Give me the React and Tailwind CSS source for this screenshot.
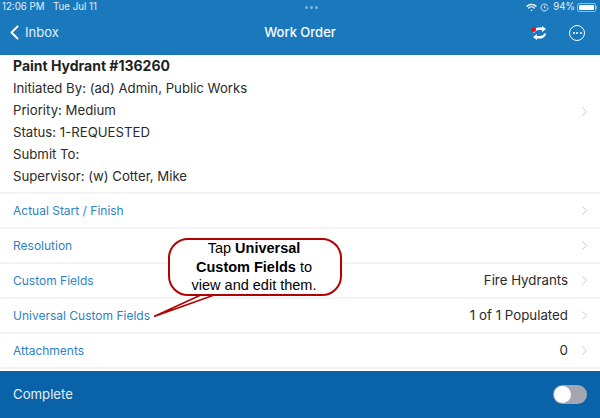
import { ChevronRight } from "lucide-react";

const rows = [
  { label: "Actual Start / Finish" },
  { label: "Resolution" },
  { label: "Custom Fields", value: "Fire Hydrants" },
  { label: "Universal Custom Fields", value: "1 of 1 Populated" },
  { label: "Attachments", value: "0" },
];

const details = ["Initiated By: (ad) Admin, Public Works", "Priority: Medium", "Status: 1-REQUESTED", "Submit To:", "Supervisor: (w) Cotter, Mike"];

const Chevron = () => <ChevronRight size={15} strokeWidth={1.5} className="text-[#c4c6cb] shrink-0" />;

const StatusBar = () => (
  <div className="flex items-center h-[15px] pl-[2px] pr-[3px] text-[9.7px] text-[#e4eff8]">
    <span className="w-[51px]">12:06 PM</span>
    <span>Tue Jul 11</span>
    <div className="flex-1 flex justify-center gap-[2px] pr-[1px]">
      <span className="w-[3px] h-[3px] rounded-full bg-[#7fb6e0]" />
      <span className="w-[3px] h-[3px] rounded-full bg-[#7fb6e0]" />
      <span className="w-[3px] h-[3px] rounded-full bg-[#7fb6e0]" />
    </div>
    <svg width="11" height="9" viewBox="0 0 22 18" fill="none" stroke="#fff" strokeWidth="2.6" strokeLinecap="round">
      <path d="M2 6.5C7 1.5 15 1.5 20 6.5" />
      <path d="M5.5 10C8.5 7 13.5 7 16.5 10" />
      <circle cx="11" cy="14.5" r="1.6" fill="#fff" stroke="none" />
    </svg>
    <svg width="9" height="9" viewBox="0 0 18 18" fill="none" stroke="#e4eff8" strokeWidth="1.8" className="ml-[3px]">
      <path d="M15.5 6.5A7 7 0 1 0 16 9" />
      <path d="M9 5.5v4h2.5" />
    </svg>
    <span className="ml-[4px]">94%</span>
    <div className="ml-[2px] flex items-center">
      <div className="w-[19px] h-[9px] rounded-[2px] border border-[#8fbfe4] p-[1px]">
        <div className="h-full w-[15px] rounded-[1px] bg-white" />
      </div>
      <div className="w-[1px] h-[3px] bg-[#8fbfe4]" />
    </div>
  </div>
);

const Header = () => (
  <div className="flex items-center h-[39px] pl-[9px] pr-[9px] pb-[4px]">
    <div className="flex flex-1 items-center text-[#e4eff8] text-[13px]">
      <svg width="11" height="15" viewBox="0 0 11 15" fill="none" stroke="#fff" strokeWidth="1.9" strokeLinecap="round" strokeLinejoin="round">
        <path d="M8.5 1.5L2.5 7.5L8.5 13.5" />
      </svg>
      <span className="ml-[5px]">Inbox</span>
    </div>
    <span className="ml-[6px] text-white text-[13px] font-medium">Work Order</span>
    <div className="flex flex-1 items-center justify-end gap-[22px] pr-[6px]">
      <div className="relative">
        <svg width="15" height="14" viewBox="0 0 15 14" className="block" fill="#fff">
          <path d="M1 6.5C1.5 3 4 1.5 7 1.5H10V0L14 3L10 6V4H7C4.5 4 3.3 5 3 6.5Z" />
          <path d="M14 7.5C13.5 11 11 12.5 8 12.5H5V14L1 11L5 8V10H8C10.5 10 11.7 9 12 7.5Z" />
        </svg>
        <span className="absolute left-[-1px] top-[1px] w-[5px] h-[5px] rounded-full bg-[#ee0f1e]" />
      </div>
      <div className="w-[16px] h-[16px] rounded-full border border-white flex items-center justify-center gap-[1.5px]">
        <span className="w-[2px] h-[2px] rounded-full bg-white" />
        <span className="w-[2px] h-[2px] rounded-full bg-white" />
        <span className="w-[2px] h-[2px] rounded-full bg-white" />
      </div>
    </div>
  </div>
);

const Callout = () => (
  <div className="absolute left-[153px] top-[238px] w-[189px] h-[79px]">
    <svg width="189" height="79" viewBox="0 0 189 79" className="absolute left-0 top-0">
      <path d="M50 56L1 78.5L64 56" fill="#fff" stroke="#b30000" strokeWidth="1.6" strokeLinejoin="miter" />
    </svg>
    <div className="absolute left-[15px] top-0 w-[174px] h-[58px] pr-[2px] rounded-[20px] border-2 border-[#b30000] bg-white flex flex-col items-center justify-center text-[14.5px] leading-[18.5px] text-black font-['Liberation_Sans',sans-serif]">
      <div>Tap <b>Universal</b></div>
      <div><b>Custom Fields</b> to</div>
      <div>view and edit them.</div>
    </div>
  </div>
);

const App = () => {
  return (
    <div className="relative w-[600px] h-[418px] overflow-hidden bg-white font-['Inter',sans-serif]">
      <div className="bg-[#1a79bd] h-[55px]">
        <StatusBar />
        <Header />
      </div>

      <div className="flex items-start h-[139px] pl-[13px] pr-[8px] border-b-2 border-[#f3f3f3]">
        <div className="flex-1 text-[13.2px] leading-[22px] text-[#2a2a2a]">
          <div className="font-bold text-[14px] text-[#1f1f1f]">Paint Hydrant #136260</div>
          {details.map((d) => (
            <div key={d}>{d}</div>
          ))}
        </div>
        <div className="mt-[49px]">
          <Chevron />
        </div>
      </div>

      {rows.map((r) => (
        <div key={r.label} className="flex items-center h-[35px] pl-[13px] pr-[8px] border-b-2 border-[#f3f3f3] text-[12px]">
          <span className="flex-1 text-[#2d83c4]">{r.label}</span>
          {r.value && <span className="mr-[9px] text-[13.3px] text-[#2a2a2a]">{r.value}</span>}
          <Chevron />
        </div>
      ))}

      <div className="flex items-center mt-[2px] h-[47px] pl-[13px] pr-[13px] bg-[#0a62a8]">
        <span className="flex-1 text-[13.2px] text-[#e4eff8]">Complete</span>
        <div className="w-[34px] h-[19px] rounded-full bg-[#a4a7b2] p-[1px]">
          <div className="w-[17px] h-[17px] rounded-full bg-white" />
        </div>
      </div>

      <Callout />
    </div>
  );
};

export default App;
